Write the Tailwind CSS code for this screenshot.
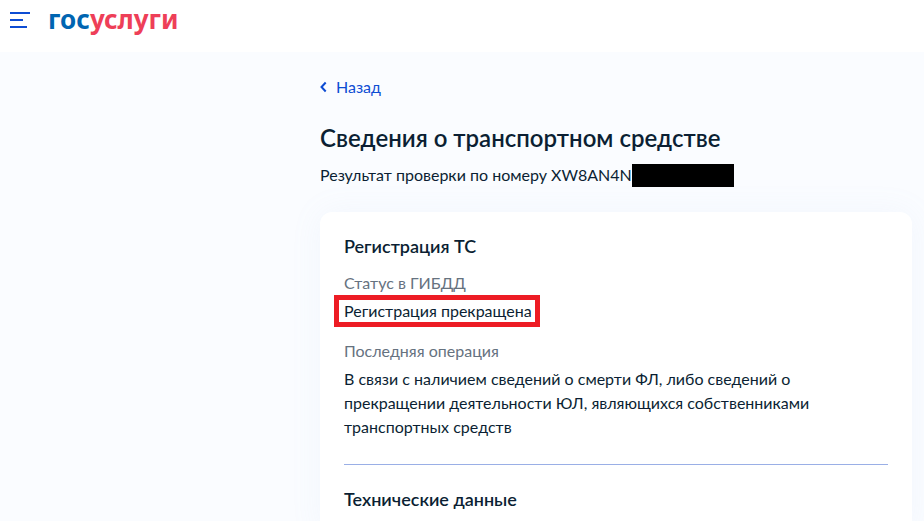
<!DOCTYPE html>
<html lang="ru">
<head>
  <meta charset="UTF-8" />
  <meta name="viewport" content="width=device-width, initial-scale=1.0" />
  <title>Сведения о транспортном средстве</title>
  <script src="https://cdn.jsdelivr.net/npm/@tailwindcss/browser@4"></script>
</head>
<body class="bg-[#fafcff] text-[#0b1f33] font-[Lato,sans-serif] text-base">
  <header class="bg-white h-[52px] flex items-start px-[10px] pt-1">
    <button type="button" aria-label="Меню" class="mt-2 mr-[18px] text-[#0d4cd3]">
      <svg class="block" width="20" height="16" viewBox="0 0 20 16" fill="currentColor">
        <rect width="20" height="2" />
        <rect y="7" width="13" height="2" />
        <rect y="14" width="17" height="2" />
      </svg>
    </button>
    <a href="#" class="font-['Noto_Sans',sans-serif] text-[26px] leading-[30px] font-bold text-[#0065b1]">гос<span class="text-[#ee3f58]">услуги</span></a>
  </header>

  <main class="ml-80 mr-3 pt-[23px]">
    <a href="#" class="inline-flex items-center gap-2 text-[#0d4cd3]">
      <svg width="8" height="12" viewBox="0 0 8 12" fill="none" stroke="currentColor" stroke-width="2">
        <path d="M5.7 1.5 L1.5 6 L5.7 10.5" />
      </svg>
      Назад
    </a>

    <h1 class="mt-[23px] text-2xl leading-8 font-semibold">Сведения о транспортном средстве</h1>
    <div class="mt-[9px] flex items-end">
      <p>Результат проверки по номеру XW8AN4N</p>
      <span class="bg-black w-[102px] h-[23px]"></span>
    </div>

    <section class="mt-[25px] bg-white rounded-xl px-6 pt-[22px] pb-6 shadow-[0_0_32px_rgba(155,175,235,0.08)]">
      <h2 class="text-lg leading-6 font-semibold">Регистрация ТС</h2>
      <dl class="mt-[13px]">
        <dt class="text-[#66727f]">Статус в ГИБДД</dt>
        <!-- рамка вокруг статуса -->
        <dd class="w-fit -ml-[10px] border-5 border-[#ed1c24] pl-[5px] pr-[3px] leading-[22px]">Регистрация прекращена</dd>
        <dt class="mt-3 text-[#66727f]">Последняя операция</dt>
        <dd class="mt-1 pr-6">В связи с наличием сведений о смерти ФЛ, либо сведений о прекращении деятельности ЮЛ, являющихся собственниками транспортных средств</dd>
      </dl>
      <div role="separator" class="mt-[25px] mb-[22px] h-px bg-[#9aafe6]"></div>
      <h2 class="text-lg leading-6 font-semibold">Технические данные</h2>
    </section>
  </main>
</body>
</html>
